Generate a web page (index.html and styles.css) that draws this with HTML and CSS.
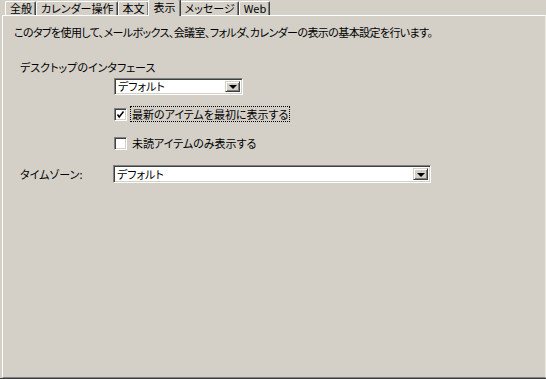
FILE: index.html
```html
<!DOCTYPE html>
<html lang="ja">
<head>
  <meta charset="UTF-8">
  <title>表示</title>
  <link rel="stylesheet" href="styles.css">
</head>
<body>
  <div class="dialog">
    <!-- Tab strip -->
    <div class="tabs">
      <div class="tab">全般</div>
      <div class="tab">カレンダー操作</div>
      <div class="tab">本文</div>
      <div class="tab active">表示</div>
      <div class="tab">メッセージ</div>
      <div class="tab">Web</div>
    </div>

    <!-- Tab page -->
    <div class="panel">
      <p class="intro">このタブを使用して、メールボックス、会議室、フォルダ、カレンダーの表示の基本設定を行います。</p>

      <div class="group-label">デスクトップのインタフェース</div>
      <div class="indent">
        <div class="select select-short">
          <span class="select-text">デフォルト</span>
          <span class="drop-btn"><span class="arrow"></span></span>
        </div>

        <div class="check check-first">
          <span class="box">
            <svg width="9" height="9" viewBox="0 0 9 9"><polyline points="1.5,4.5 3.2,7 7.5,1.5" fill="none" stroke="#000" stroke-width="1.5"/></svg>
          </span>
          <span class="check-text focus">最新のアイテムを最初に表示する</span>
        </div>

        <div class="check check-second">
          <span class="box"></span>
          <span class="check-text">未読アイテムのみ表示する</span>
        </div>
      </div>

      <div class="row">
        <span class="row-label">タイムゾーン:</span>
        <div class="select select-long">
          <span class="select-text">デフォルト</span>
          <span class="drop-btn"><span class="arrow"></span></span>
        </div>
      </div>
    </div>
  </div>
</body>
</html>
```

FILE: styles.css
```css
body {
  margin: 0;
  background-color: #d4d0c8;
  font-family: "Noto Sans CJK JP", "Noto Sans", sans-serif;
  font-size: 11px;
  font-feature-settings: "palt";
  color: #000;
}
.dialog {
  width: 546px;
  height: 379px;
  display: flex;
  flex-direction: column;
  padding-left: 2px;
  box-sizing: border-box;
  border-bottom: 1px solid #404040;
}
.tabs {
  display: flex;
  align-items: flex-end;
  height: 15px;
  padding-left: 3px;
}
.tab {
  height: 13px;
  line-height: 13px;
  padding: 0 3px 0 4px;
  border-top: 1px solid #fff;
  border-left: 1px solid #fff;
  border-right: 1px solid #404040;
  box-shadow: inset -1px 0 #808080;
  border-radius: 2px 2px 0 0;
  white-space: nowrap;
}
.tab.active {
  position: relative;
  z-index: 1;
  height: 15px;
  line-height: 13px;
  margin: 0 -1px -1px -1px;
  padding: 1px 4px 0 5px;
  background-color: #d4d0c8;
}
.panel {
  flex: 1;
  border-top: 1px solid #fff;
  border-left: 1px solid #fff;
  border-right: 1px solid #ece9e4;
  border-bottom: 1px solid #808080;
  padding: 0 0 0 11px;
}
.intro {
  margin: 9px 0 0;
  line-height: 14px;
  letter-spacing: -0.6px;
}
.group-label {
  margin: 21px 0 0 6px;
  line-height: 14px;
}
.indent {
  margin-left: 100px;
}
.select {
  display: flex;
  align-items: center;
  box-sizing: border-box;
  background: #fff;
  border-top: 1px solid #808080;
  border-left: 1px solid #808080;
  border-right: 1px solid #fff;
  border-bottom: 1px solid #fff;
  box-shadow: inset 1px 1px #404040, inset -1px -1px #d4d0c8;
  padding: 2px;
}
.select-short {
  width: 129px;
  height: 17px;
  margin-top: 4px;
}
.select-long {
  width: 318px;
  height: 18px;
}
.select-text {
  flex: 1;
  line-height: 13px;
  padding-left: 1px;
}
.drop-btn {
  width: 15px;
  height: 100%;
  box-sizing: border-box;
  background: #d4d0c8;
  border-top: 1px solid #d4d0c8;
  border-left: 1px solid #d4d0c8;
  border-right: 1px solid #404040;
  border-bottom: 1px solid #404040;
  box-shadow: inset 1px 1px #fff, inset -1px -1px #808080;
  display: flex;
  align-items: center;
  justify-content: center;
}
.arrow {
  width: 0;
  height: 0;
  border-left: 4px solid transparent;
  border-right: 4px solid transparent;
  border-top: 4px solid #000;
  margin-top: 1px;
}
.check {
  display: flex;
  align-items: center;
  height: 16px;
}
.check-first {
  margin-top: 11px;
}
.check-second {
  margin-top: 13px;
}
.box {
  width: 13px;
  height: 13px;
  box-sizing: border-box;
  background: #fff;
  border-top: 1px solid #808080;
  border-left: 1px solid #808080;
  border-right: 1px solid #fff;
  border-bottom: 1px solid #fff;
  box-shadow: inset 1px 1px #404040, inset -1px -1px #d4d0c8;
  display: flex;
  align-items: center;
  justify-content: center;
}
.check-text {
  margin-left: 3px;
  line-height: 14px;
  padding: 0 1px;
  border: 1px dotted transparent;
}
.check-text.focus {
  border-color: #000;
}
.row {
  display: flex;
  align-items: center;
  margin-top: 14px;
}
.row-label {
  width: 99px;
  padding-left: 6px;
  box-sizing: border-box;
}
```
